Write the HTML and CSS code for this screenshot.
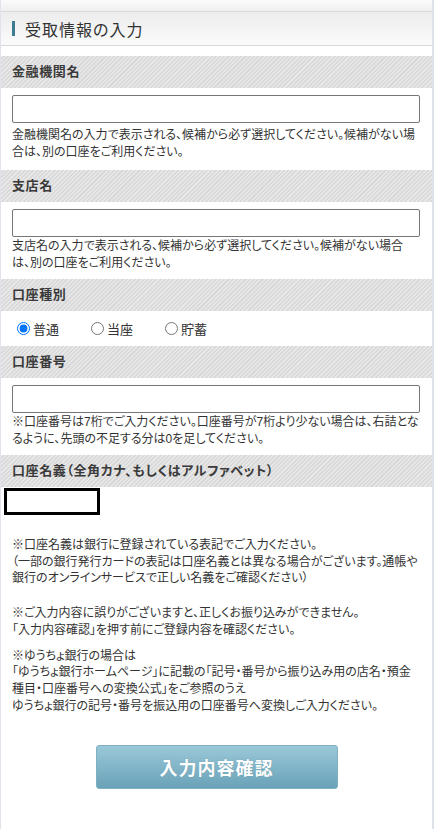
FILE: index.html
```html
<!DOCTYPE html>
<html lang="ja">
<head>
  <meta charset="UTF-8" />
  <meta name="viewport" content="width=device-width, initial-scale=1.0" />
  <title>受取情報の入力</title>
  <link rel="stylesheet" href="styles.css">
</head>
<body>
  <div class="page">
    <div class="topbar"></div>
    <h1 class="title"><span class="title-bar"></span>受取情報の入力</h1>

    <div class="form">
      <h2 class="sec-head">金融機関名</h2>
      <div class="field field-first">
        <input type="text" class="text-input" id="bankName" />
        <p class="help">金融機関名の入力で表示される、候補から必ず選択してください。候補がない場合は、別の口座をご利用ください。</p>
      </div>

      <h2 class="sec-head">支店名</h2>
      <div class="field">
        <input type="text" class="text-input" id="branchName" />
        <p class="help">支店名の入力で表示される、候補から必ず選択してください。候補がない場合は、別の口座をご利用ください。</p>
      </div>

      <h2 class="sec-head">口座種別</h2>
      <div class="radios">
        <label class="radio"><input type="radio" name="accountType" checked />普通</label>
        <label class="radio"><input type="radio" name="accountType" />当座</label>
        <label class="radio"><input type="radio" name="accountType" />貯蓄</label>
      </div>

      <h2 class="sec-head">口座番号</h2>
      <div class="field">
        <input type="text" class="text-input" id="accountNumber" />
        <p class="help">※口座番号は7桁でご入力ください。口座番号が7桁より少ない場合は、右詰となるように、先頭の不足する分は0を足してください。</p>
      </div>

      <h2 class="sec-head">口座名義（全角カナ、もしくはアルファベット）</h2>
      <div class="name-field">
        <input type="text" class="name-input" id="accountName" />
        <div class="notes">
          <p>※口座名義は銀行に登録されている表記でご入力ください。<br>（一部の銀行発行カードの表記は口座名義とは異なる場合がございます。通帳や銀行のオンラインサービスで正しい名義をご確認ください）</p>
          <p>※ご入力内容に誤りがございますと、正しくお振り込みができません。<br>「入力内容確認」を押す前にご登録内容を確認ください。</p>
          <p>※ゆうちょ銀行の場合は<br>「ゆうちょ銀行ホームページ」に記載の「記号・番号から振り込み用の店名・預金種目・口座番号への変換公式」をご参照のうえ<br>ゆうちょ銀行の記号・番号を振込用の口座番号へ変換しご入力ください。</p>
        </div>
      </div>

      <div class="actions">
        <button class="confirm-btn" type="button">入力内容確認</button>
      </div>
    </div>
  </div>
</body>
</html>
```

FILE: styles.css
```css
body {
  margin: 0;
  font-family: "Liberation Sans", "Noto Sans CJK JP", sans-serif;
  color: #333;
  background: #fff;
  font-feature-settings: "palt";
}
.page {
  min-height: 829px;
  border-left: 1px solid #e0e4ea;
  border-right: 2px solid #dde2e9;
  background: #fff;
}
.topbar {
  height: 11px;
  background: linear-gradient(#fbfbfb, #efefef);
  border-bottom: 1px solid #d6d9dd;
}
.title {
  margin: 0;
  height: 33px;
  display: flex;
  align-items: center;
  padding-left: 11px;
  font-size: 16px;
  font-weight: normal;
  letter-spacing: 1px;
  color: #333;
  background: linear-gradient(#ececec, #fbfbfb);
  border-bottom: 1px solid #d6d9dd;
}
.title-bar {
  width: 3px;
  height: 15px;
  margin-right: 10px;
  background: #3d7b91;
}
.form {
  padding-top: 10px;
}
.sec-head {
  margin: 0;
  height: 32px;
  line-height: 32px;
  padding-left: 11px;
  font-size: 13px;
  font-weight: bold;
  letter-spacing: 0.6px;
  color: #3a3a3a;
  background: repeating-linear-gradient(135deg, #e7e7e7 0 1.5px, #d9d9d9 1.5px 3px);
}
.field {
  padding: 7px 12px 7px 11px;
}
.field-first {
  padding-bottom: 9px;
}
.text-input {
  display: block;
  box-sizing: border-box;
  width: 100%;
  height: 28px;
  margin: 0;
  border: 1px solid #767676;
  border-radius: 2px;
  background: #fff;
}
.help {
  margin: 1px 0 0;
  font-size: 12px;
  line-height: 17px;
}
.field-first .help {
  margin-top: 4px;
}
.radios {
  height: 35px;
  display: flex;
  align-items: center;
  padding-left: 11px;
  font-size: 13px;
}
.radio {
  display: flex;
  align-items: center;
  margin-right: 27px;
}
.radio input {
  margin: 0 3px 0 5px;
  width: 13px;
  height: 13px;
}
.name-field {
  padding: 1px 12px 0 3px;
}
.name-input {
  display: block;
  box-sizing: border-box;
  width: 96px;
  height: 27px;
  margin: 0;
  border: 3px solid #000;
  background: #fff;
}
.notes {
  padding: 22px 0 0 8px;
  font-size: 12px;
  line-height: 16.7px;
}
.notes p {
  margin: 0;
}
.notes p + p {
  margin-top: 18px;
}
.notes p:last-child {
  margin-top: 9px;
}
.actions {
  padding: 31px 0 40px;
  text-align: center;
}
.confirm-btn {
  width: 242px;
  height: 44px;
  border: 1px solid #80b1c3;
  border-radius: 3px;
  background: linear-gradient(#9ac8d8, #6aa2b8);
  color: #fff;
  font-family: "Liberation Sans", "Noto Sans CJK JP", sans-serif;
  font-size: 18px;
  font-weight: bold;
  letter-spacing: 1px;
  text-shadow: 0 0 1px rgba(60, 100, 120, 0.4);
  cursor: pointer;
}
.confirm-btn:hover {
  background: linear-gradient(#8bbccd, #5e96ac);
}
```
